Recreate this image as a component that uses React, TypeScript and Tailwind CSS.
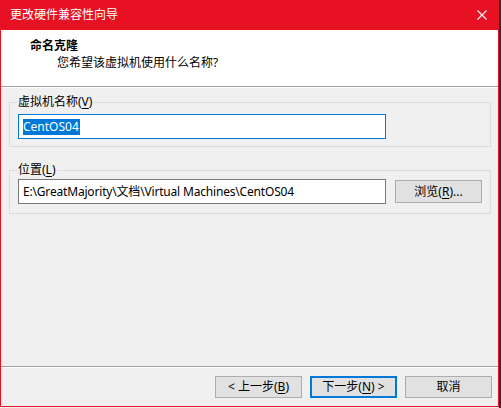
const FONT = { fontFamily: '"Noto Sans", "Noto Sans CJK SC", sans-serif' }

function Mn({ children }: { children: string }) {
  return <span className="underline underline-offset-2">{children}</span>
}

function Btn({ children, primary = false }: { children: React.ReactNode; primary?: boolean }) {
  return (
    <button
      className={
        primary
          ? 'w-[87px] h-[22px] bg-[#e1e1e1] border-2 border-[#0078d7] text-[12px] leading-none text-black flex items-center justify-center'
          : 'w-[87px] h-[22px] bg-[#e1e1e1] border border-[#adadad] text-[12px] leading-none text-black flex items-center justify-center'
      }
    >
      {children}
    </button>
  )
}

export default function App() {
  return (
    <div className="flex w-[501px] h-[408px] bg-[#f0f0f0]" style={FONT}>
      <div className="w-[499px] h-[407px] flex flex-col border-x border-b border-[#e81123]">
        {/* title bar */}
        <div className="h-[30px] shrink-0 bg-[#e81123] -mx-px flex items-center pl-[10px] pr-[12px]">
          <span className="text-white text-[12px] leading-none flex-1">更改硬件兼容性向导</span>
          <svg width="10" height="10" viewBox="0 0 10 10" className="mb-[1px]">
            <path d="M0.5 0.5 L9.5 9.5 M9.5 0.5 L0.5 9.5" stroke="#fff" strokeWidth="1.1" fill="none" />
          </svg>
        </div>

        {/* header */}
        <div className="h-[57px] shrink-0 bg-white border-b border-[#a0a0a0] shadow-[0_1px_0_#ffffff] pt-[8px] pl-[29px] relative">
          <div className="text-[12px] leading-[16px] font-bold text-black">命名克隆</div>
          <div className="text-[12px] leading-[16px] text-black mt-[1px] pl-[27px]">您希望该虚拟机使用什么名称?</div>
        </div>

        {/* body */}
        <div className="flex-1 pt-[7px] pl-[8px] pr-[7px] flex flex-col">
          <fieldset className="border border-[#dcdcdc] pl-[8px] pt-[4px] pb-[7px] min-w-0">
            <legend className="text-[12px] leading-[16px] text-black px-[1px] -ml-[1px]">
              虚拟机名称(<Mn>V</Mn>)
            </legend>
            <div className="w-[368px] h-[25px] bg-white border border-[#0078d7] flex items-center pl-[4px]">
              <span className="bg-[#0078d7] text-white text-[12px] leading-[16px] pr-px">CentOS04</span>
            </div>
          </fieldset>

          <fieldset className="mt-[15px] border border-[#dcdcdc] pl-[8px] pt-[1px] pb-[9px] min-w-0">
            <legend className="text-[12px] leading-[16px] text-black px-[1px] -ml-[1px]">
              位置(<Mn>L</Mn>)
            </legend>
            <div className="flex items-start gap-[9px]">
              <div className="w-[368px] h-[25px] bg-white border border-[#7a7a7a] flex items-center pl-[4px]">
                <span className="text-black text-[12px] leading-[15px] whitespace-nowrap tracking-[-0.18px]">
                  E:\GreatMajority\文档\Virtual Machines\CentOS04
                </span>
              </div>
              <button className="mt-[1px] w-[87px] h-[23px] bg-[#e1e1e1] border border-[#adadad] text-[12px] leading-none text-black flex items-center justify-center">
                浏览(<Mn>R</Mn>)...
              </button>
            </div>
          </fieldset>
        </div>

        {/* footer */}
        <div className="h-[40px] shrink-0 border-t border-[#a0a0a0] shadow-[inset_0_1px_0_#ffffff] pt-[9px] pr-[6px] flex items-start justify-end gap-[8px]">
          <Btn>
            &lt; 上一步(<Mn>B</Mn>)
          </Btn>
          <Btn primary>
            下一步(<Mn>N</Mn>) &gt;
          </Btn>
          <Btn>取消</Btn>
        </div>
      </div>
      <div className="w-[2px] h-[408px] bg-[#2d2d2d]" />
    </div>
  )
}
